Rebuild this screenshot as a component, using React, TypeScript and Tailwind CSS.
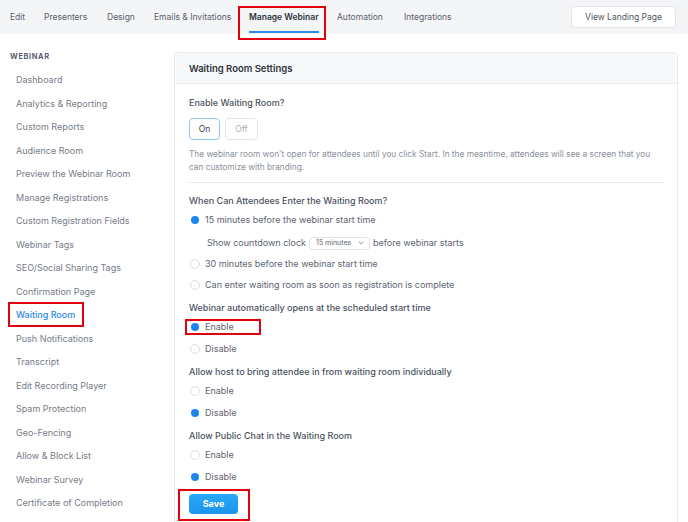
import { ChevronDown } from 'lucide-react';

const tabs = [
  { label: 'Edit', w: 'w-[34px]' },
  { label: 'Presenters', w: 'w-[63px]' },
  { label: 'Design', w: 'w-[47px]' },
  { label: 'Emails & Invitations', w: 'w-[95px]' },
  { label: 'Manage Webinar', w: 'w-[88px]', active: true },
  { label: 'Automation', w: 'w-[67px]' },
  { label: 'Integrations', w: 'w-[70px]' },
];

const menu = [
  'Dashboard',
  'Analytics & Reporting',
  'Custom Reports',
  'Audience Room',
  'Preview the Webinar Room',
  'Manage Registrations',
  'Custom Registration Fields',
  'Webinar Tags',
  'SEO/Social Sharing Tags',
  'Confirmation Page',
  'Waiting Room',
  'Push Notifications',
  'Transcript',
  'Edit Recording Player',
  'Spam Protection',
  'Geo-Fencing',
  'Allow & Block List',
  'Webinar Survey',
  'Certificate of Completion',
  'Integrations & Webhooks',
];

function Radio({ checked, label, boxed }: { checked?: boolean; label: string; boxed?: boolean }) {
  return (
    <div className="relative h-[22px] flex items-center">
      {checked ? (
        <span className="w-[10px] h-[10px] rounded-full flex items-center justify-center ml-[1px]">
          <span className="w-[8px] h-[8px] rounded-full bg-[#1a85ec]" />
        </span>
      ) : (
        <span className="w-[10px] h-[10px] rounded-full border border-[#dcdfe4] bg-white ml-[1px]" />
      )}
      <span className="ml-[5px] text-[9px] text-[#5e6470]">{label}</span>
      {boxed && (
        <span className="absolute left-[-4px] top-[3px] w-[76px] h-[16px] border-2 border-[#e3000f]" />
      )}
    </div>
  );
}

function Label({ text, className = '' }: { text: string; className?: string }) {
  return (
    <div className={`h-[16px] flex items-center text-[9px] font-medium text-[#4c525e] ${className}`}>{text}</div>
  );
}

export default function App() {
  return (
    <div
      className="w-[688px] h-[522px] overflow-hidden bg-white"
      style={{ fontFamily: 'Inter, "Noto Sans", sans-serif' }}
    >
      {/* Top tabs */}
      <div className="h-[34px] bg-[#f4f5f7] flex items-center pl-[10px] pr-[12px]">
        {tabs.map((t) => (
          <div key={t.label} className={`${t.w} relative h-full flex items-center shrink-0`}>
            <span
              className={`relative whitespace-nowrap text-[8.5px] ${
                t.active ? 'font-semibold text-[#2f343d]' : 'text-[#5b616c]'
              }`}
            >
              {t.label}
              {t.active && <span className="absolute left-0 right-0 top-[20px] h-[2px] bg-[#2c8ce6]" />}
            </span>
            {t.active && (
              <span className="absolute left-[-11px] top-[6px] w-[88px] h-[34px] border-[2.5px] border-[#e3000f] z-10" />
            )}
          </div>
        ))}
        <div className="ml-auto w-[105px] h-[22px] bg-white border border-[#e3e5e9] rounded-sm flex items-center justify-center text-[8.5px] text-[#50565f]">
          View Landing Page
        </div>
      </div>

      <div className="flex">
        {/* Sidebar */}
        <div className="w-[174px] shrink-0 pt-[17px]">
          <div className="h-[12px] flex items-center pl-[10px] text-[7.5px] font-bold tracking-[0.08em] text-[#5b6270]">
            WEBINAR
          </div>
          <div className="mt-[5px]">
            {menu.map((m) => (
              <div key={m} className="h-[23.5px] flex items-center pl-[16px]">
                <span
                  className={`relative text-[9px] whitespace-nowrap ${
                    m === 'Waiting Room' ? 'text-[#2a87e6] font-medium' : 'text-[#767c88]'
                  }`}
                >
                  {m}
                  {m === 'Waiting Room' && (
                    <span className="absolute left-[-8px] top-[-6px] w-[76px] h-[25px] border-2 border-[#e3000f]" />
                  )}
                </span>
              </div>
            ))}
          </div>
        </div>

        {/* Main */}
        <div className="flex-1 pt-[18px] pr-[11px]">
          <div className="border border-[#e8eaee] rounded-sm h-[500px]">
            <div className="h-[31px] bg-[#f7f8fa] border-b border-[#eceef1] flex items-center pt-[2px] px-[14px] text-[9.5px] font-semibold text-[#2e333b]">
              Waiting Room Settings
            </div>
            <div className="px-[14px] pt-[11px]">
              <Label text="Enable Waiting Room?" />
              <div className="flex gap-[5px] mt-[7px]">
                <div className="w-[31px] h-[22px] border border-[#8fc6f3] rounded-sm flex items-center justify-center text-[8.5px] text-[#3b414b]">
                  On
                </div>
                <div className="w-[33px] h-[22px] border border-[#e3e5e9] rounded-sm flex items-center justify-center text-[8.5px] text-[#a9aeb6]">
                  Off
                </div>
              </div>
              <p className="mt-[8px] w-[474px] text-[8.3px] leading-[13px] text-[#8a909b]">
                The webinar room won't open for attendees until you click Start. In the meantime, attendees will see a
                screen that you can customize with branding.
              </p>
              <div className="mt-[8px] w-[474px] border-t border-[#e6e8ec]" />

              <Label text="When Can Attendees Enter the Waiting Room?" className="mt-[10px]" />
              <Radio checked label="15 minutes before the webinar start time" />
              <div className="h-[22px] mt-[1px] flex items-center pl-[18px] text-[9px] text-[#5e6470]">
                <span>Show countdown clock</span>
                <span className="mx-[3px] w-[61px] h-[13px] border border-[#dfe2e6] rounded-sm flex items-center justify-between pl-[6px] pr-[4px] text-[7px] text-[#5e6470]">
                  15 minutes
                  <ChevronDown className="w-[8px] h-[8px]" strokeWidth={2} />
                </span>
                <span>before webinar starts</span>
              </div>
              <div className="h-[20px] flex items-center">
                <span className="w-[10px] h-[10px] rounded-full border border-[#dcdfe4] bg-white ml-[1px]" />
                <span className="ml-[5px] text-[9px] text-[#5e6470]">30 minutes before the webinar start time</span>
              </div>
              <Radio label="Can enter waiting room as soon as registration is complete" />

              <Label text="Webinar automatically opens at the scheduled start time" className="mt-[4px]" />
              <Radio checked boxed label="Enable" />
              <Radio label="Disable" />

              <Label text="Allow host to bring attendee in from waiting room individually" className="mt-[4px]" />
              <Radio label="Enable" />
              <Radio checked label="Disable" />

              <Label text="Allow Public Chat in the Waiting Room" className="mt-[4px]" />
              <Radio label="Enable" />
              <Radio checked label="Disable" />

              <div className="relative mt-[6px] w-[49px] h-[20px] rounded-sm bg-gradient-to-b from-[#2aa8f7] to-[#1a95ec] flex items-center justify-center text-[9px] font-bold text-white">
                Save
                <span className="absolute left-[-11px] top-[-5px] w-[72px] h-[32px] border-[2.5px] border-[#e3000f]" />
              </div>
            </div>
          </div>
        </div>
      </div>
    </div>
  );
}
